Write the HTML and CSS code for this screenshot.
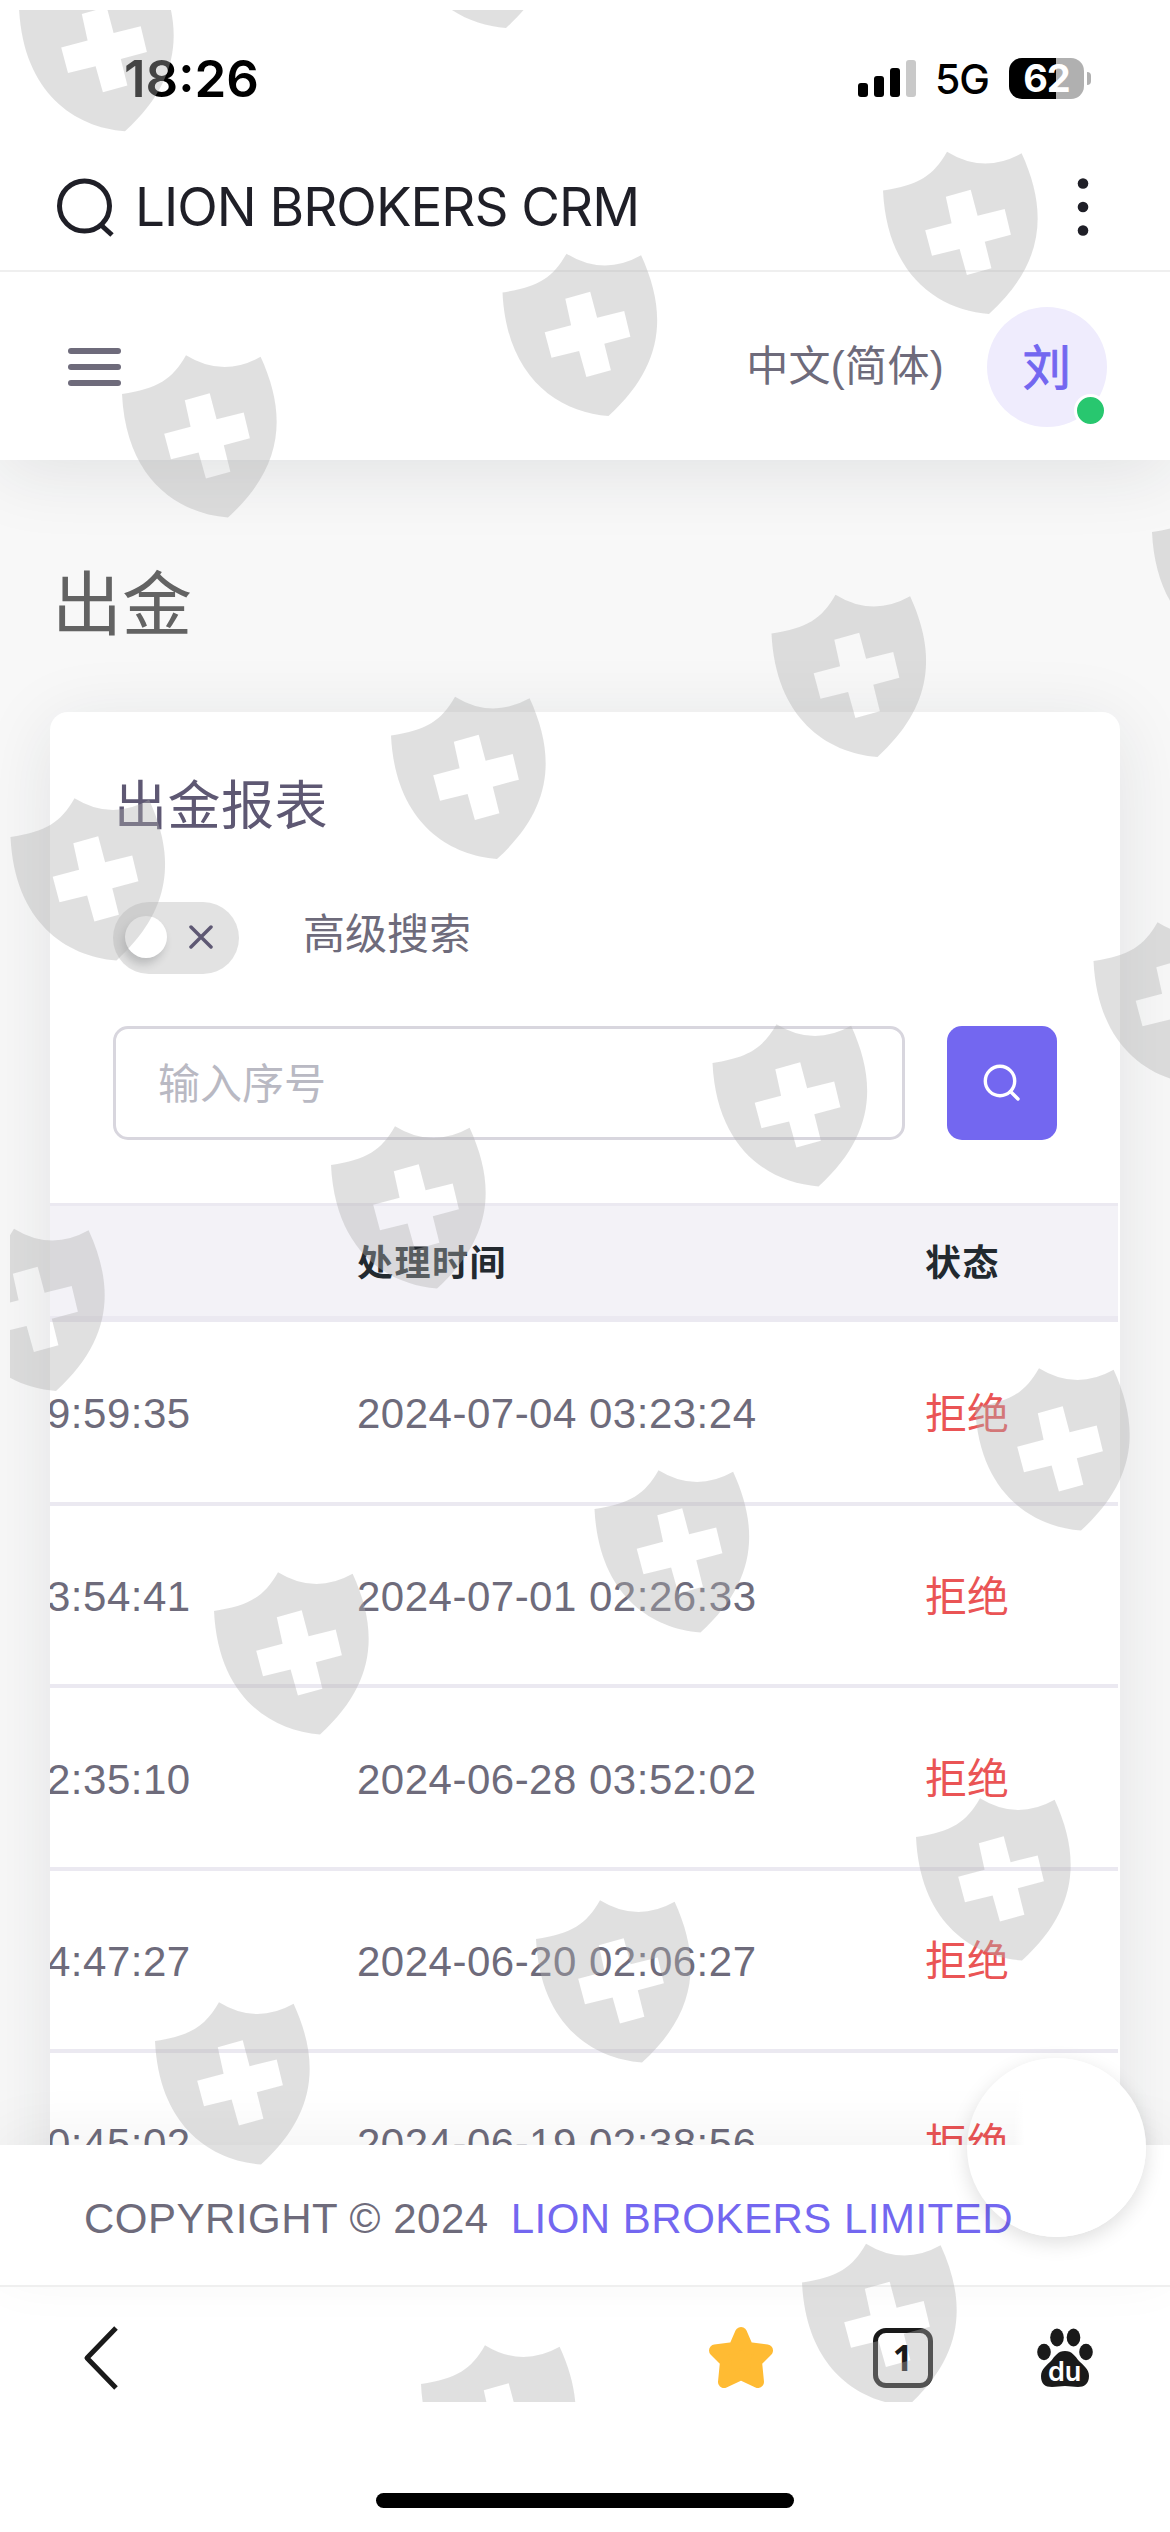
FILE: index.html
```html
<!DOCTYPE html>
<html lang="zh-CN">
<head>
  <meta charset="UTF-8" />
  <meta name="viewport" content="width=device-width, initial-scale=1" />
  <title>LION BROKERS CRM</title>
  <link rel="stylesheet" href="styles.css">
</head>
<body>
<div class="phone">

  <div class="status-bar">
    <span class="clock">18:26</span>
    <div class="status-icons">
      <svg class="signal" width="59" height="38" viewBox="0 0 59 38">
        <rect x="0" y="23" width="10" height="14" rx="3" />
        <rect x="16" y="16" width="10" height="21" rx="3" />
        <rect x="32" y="8" width="10" height="29" rx="3" />
        <rect x="48" y="0" width="10" height="37" rx="3" fill="#c9c9c9" />
      </svg>
      <span class="network">5G</span>
      <span class="battery">62</span>
      <span class="battery-tip"></span>
    </div>
  </div>

  <div class="browser-bar">
    <svg width="58" height="60" viewBox="0 0 58 60" fill="none" stroke="#1f1f27" stroke-width="5">
      <circle cx="28.5" cy="29" r="25" />
      <path d="M45 48l11 10" />
    </svg>
    <span class="page-title">LION BROKERS CRM</span>
    <svg class="dots" width="12" height="60" viewBox="0 0 12 60" fill="#1f1f27">
      <circle cx="6" cy="6.500" r="5.300" /><circle cx="6" cy="30" r="5.300" /><circle cx="6" cy="53.500" r="5.300" />
    </svg>
  </div>

  <header class="navbar">
    <div class="menu"><i></i><i></i><i></i></div>
    <span class="lang">中文(简体)</span>
    <div class="avatar">刘<span class="online"></span></div>
  </header>

  <main class="content">
    <h1>出金</h1>
    <section class="card">
      <h2>出金报表</h2>
      <div class="switch-row">
        <div class="switch">
          <span class="knob"></span>
          <svg width="24" height="24" viewBox="0 0 24 24" stroke="#5e5873" stroke-width="3.500" stroke-linecap="round"><path d="M2 2l20 20M22 2L2 22" /></svg>
        </div>
        <span class="switch-label">高级搜索</span>
      </div>
      <div class="search-row">
        <div class="search-input">输入序号</div>
        <div class="search-btn">
          <svg width="38" height="38" viewBox="0 0 38 38" fill="none" stroke="#fff" stroke-width="3.400" stroke-linecap="round">
            <circle cx="17" cy="17" r="14.700" /><path d="M27.500 27.500l7.500 7.500" />
          </svg>
        </div>
      </div>
      <div class="table-wrap">
        <table>
          <thead>
            <tr><th class="col-apply"></th><th class="col-time">处理时间</th><th>状态</th></tr>
          </thead>
          <tbody>
            <tr><td>9:59:35</td><td>2024-07-04 03:23:24</td><td class="reject">拒绝</td></tr>
            <tr><td>3:54:41</td><td>2024-07-01 02:26:33</td><td class="reject">拒绝</td></tr>
            <tr><td>2:35:10</td><td>2024-06-28 03:52:02</td><td class="reject">拒绝</td></tr>
            <tr><td>4:47:27</td><td>2024-06-20 02:06:27</td><td class="reject">拒绝</td></tr>
            <tr><td>0:45:02</td><td>2024-06-19 02:38:56</td><td class="reject">拒绝</td></tr>
          </tbody>
        </table>
      </div>
    </section>
  </main>

  <footer class="footer">
    <span>COPYRIGHT © 2024</span>
    <a class="company">LION BROKERS LIMITED</a>
    <div class="float-btn"></div>
  </footer>

  <nav class="tab-bar">
    <svg class="back" width="36" height="66" viewBox="0 0 36 66" fill="none" stroke="#1a1a1a" stroke-width="5" stroke-linejoin="round"><path d="M33 3L4 33l29 30" /></svg>
    <svg class="star" width="64" height="64" viewBox="0 0 64 64" fill="#ffbb33" stroke="#ffbb33" stroke-width="12" stroke-linejoin="round">
      <path d="M32 7l6.500 15L58 24.500 47 35.500l2 20.500-17-8-17 8 2-20.500L6 24.500 25.500 22z" />
    </svg>
    <div class="tabs">1</div>
    <svg class="paw" width="58" height="60" viewBox="0 0 58 60" fill="#1a1a1a">
      <ellipse cx="21" cy="9.500" rx="6.800" ry="9" />
      <ellipse cx="37.500" cy="9.500" rx="6.800" ry="9" />
      <ellipse cx="8" cy="24" rx="6.800" ry="8.300" />
      <ellipse cx="50" cy="24" rx="6.800" ry="8.300" />
      <path d="M29 23c7 0 10 5 14 10 4 4 10 8 10 15 0 8-5 11-11 11-5 0-8-1-13-1s-8 1-13 1C9 59 5 56 5 48c0-7 6-11 10-15 4-5 7-10 14-10z" />
      <text class="paw-text" x="12" y="53">du</text>
    </svg>
  </nav>
  <div class="home-bar"></div>

  <!-- watermark -->
  <svg class="watermark" width="1160" height="2392" viewBox="10 10 1160 2392">
    <defs>
      <path id="shield" fill-rule="evenodd" d="M0 39.500C36 34 50 25 64 .7Q101 23.500 138.600 2.300C165 60 162 112 106 163C55 159 4 124 0 39.500zM62.800 45.700L87.700 38.700 94.600 64.700 121.700 58 127.900 83.700 101.800 90.700 108.400 117.300 83.900 124 76.600 98 49 104.700 42.200 79.300 68.600 72.300z" />
    </defs>
    <use href="#shield" x="19" y="-31.700" />
    <use href="#shield" x="400" y="-135" />
    <use href="#shield" x="883" y="151" />
    <use href="#shield" x="502.500" y="253" />
    <use href="#shield" x="122" y="354.500" />
    <use href="#shield" x="1152" y="492.500" />
    <use href="#shield" x="771.500" y="594" />
    <use href="#shield" x="391" y="696" />
    <use href="#shield" x="10.500" y="797.500" />
    <use href="#shield" x="1093.500" y="921.500" />
    <use href="#shield" x="712.500" y="1023.500" />
    <use href="#shield" x="331" y="1125.500" />
    <use href="#shield" x="-50" y="1228" />
    <use href="#shield" x="975" y="1367.500" />
    <use href="#shield" x="594.500" y="1469.500" />
    <use href="#shield" x="214" y="1571.500" />
    <use href="#shield" x="916" y="1797.500" />
    <use href="#shield" x="536" y="1899.500" />
    <use href="#shield" x="155" y="2001.500" />
    <use href="#shield" x="802" y="2243" />
    <use href="#shield" x="421" y="2344.500" />
  </svg>
</div>
</body>
</html>
```
FILE: styles.css
```css
* {
  box-sizing: border-box;
}
body {
  margin: 0;
  font-family: "Liberation Sans", "Noto Sans CJK SC", sans-serif;
  font-size: 42px;
  letter-spacing: .5px;
  color: #6e6b7b;
  background: #fff;
}
.phone {
  position: relative;
  width: 1170px;
  height: 2532px;
  overflow: hidden;
  display: flex;
  flex-direction: column;
}
svg {
  display: block;
  flex: none;
}

/* phone status bar */
.status-bar {
  height: 157px;
  padding: 0 79px 0 124px;
  display: flex;
  justify-content: space-between;
  align-items: center;
  color: #000;
  font-family: Inter, sans-serif;
}
.clock {
  font-size: 51px;
  font-weight: 600;
  letter-spacing: 0;
}
.status-icons {
  display: flex;
  align-items: center;
}
.network {
  font-size: 41px;
  font-weight: 500;
  letter-spacing: -1px;
  margin: 0 20px 0 18px;
}
.battery {
  width: 75px;
  height: 41px;
  line-height: 41px;
  border-radius: 13px;
  background: linear-gradient(90deg, #000 47px, #b0b0b0 47px);
  color: #fff;
  font-size: 38px;
  font-weight: 700;
  letter-spacing: -1px;
  text-align: center;
}
.battery-tip {
  width: 4px;
  height: 13px;
  margin-left: 3px;
  border-radius: 0 5px 5px 0;
  background: #b0b0b0;
}

/* browser title */
.browser-bar {
  position: relative;
  z-index: 2;
  height: 115px;
  padding: 0 81px 13px 56px;
  border-bottom: 2px solid #efefef;
  display: flex;
  align-items: center;
  color: #1f1f27;
  background: #fff;
}
.page-title {
  flex: 1;
  margin-left: 21px;
  font-family: Inter, sans-serif;
  font-size: 53px;
  letter-spacing: -1px;
  white-space: nowrap;
}

/* site header */
.navbar {
  position: relative;
  z-index: 1;
  height: 188px;
  padding: 2px 63px 0 68px;
  display: flex;
  align-items: center;
  background: #fff;
  box-shadow: 0 12px 72px rgba(34, 41, 47, .1);
}
.menu {
  display: grid;
  gap: 10px;
  margin-right: auto;
}
.menu i {
  width: 53px;
  height: 6px;
  border-radius: 3px;
  background: #6e6b7b;
}
.lang {
  padding-bottom: 9px;
  margin-right: 43px;
  letter-spacing: .3px;
}
.avatar {
  position: relative;
  width: 120px;
  height: 120px;
  line-height: 124px;
  border-radius: 50%;
  background: #efecfd;
  color: #7367f0;
  font-size: 48px;
  -webkit-text-stroke: 1px #7367f0;
  text-align: center;
}
.online {
  position: absolute;
  right: 0;
  bottom: 0;
  width: 33px;
  height: 33px;
  border: 3px solid #fff;
  border-radius: 50%;
  background: #28c76f;
}

/* page body */
.content {
  height: 1685px;
  padding: 92px 50px 0;
  background: #f8f8f8;
  overflow: hidden;
}
h1 {
  margin: 0 0 52px 2px;
  font-size: 70px;
  line-height: 109px;
  height: 108px;
  font-weight: 400;
  letter-spacing: 0;
  color: #636363;
}
.card {
  height: 1600px;
  padding: 62px 0 0;
  border-radius: 18px;
  background: #fff;
  box-shadow: 0 12px 72px rgba(34, 41, 47, .1);
}
h2 {
  margin: 0 0 0 64px;
  font-size: 53px;
  line-height: 66px;
  font-weight: 400;
  color: #5e5873;
}
.switch-row {
  display: flex;
  align-items: center;
  gap: 64px;
  margin: 62px 0 0 63px;
  height: 72px;
  line-height: 64px;
}
.switch {
  width: 126px;
  height: 72px;
  padding: 0 26px 3px 12px;
  border-radius: 36px;
  background: #e2e2e2;
  display: flex;
  align-items: center;
  justify-content: space-between;
}
.switch-label {
  padding-bottom: 6px;
  letter-spacing: 0;
}
.knob {
  width: 42px;
  height: 42px;
  border-radius: 50%;
  background: #fff;
  box-shadow: -3px 6px 9px rgba(34, 41, 47, .2);
}
.search-row {
  display: flex;
  gap: 42px;
  padding: 52px 63px 63px;
}
.search-input {
  flex: 1;
  height: 114px;
  padding-left: 42px;
  line-height: 112px;
  letter-spacing: 0;
  border: 3px solid #d8d6de;
  border-radius: 15px;
  color: #b9b9c3;
}
.search-btn {
  width: 110px;
  height: 114px;
  border-radius: 15px;
  background: #7367f0;
  display: grid;
  place-items: center;
}
.table-wrap {
  width: 1068px;
  overflow: hidden;
}
table {
  width: 1071px;
  margin-left: -3px;
  table-layout: fixed;
  border-collapse: separate;
  border-spacing: 0;
}
th, td {
  padding: 0;
  text-align: left;
  white-space: nowrap;
}
th {
  height: 119px;
  padding-bottom: 3px;
  background: #f3f2f7;
  border-top: 3px solid #ebe9f1;
  border-bottom: 6px solid #ebe9f1;
  color: #22292f;
  font-size: 36px;
  font-weight: 600;
  letter-spacing: 1.5px;
}
.col-apply {
  width: 310px;
}
.col-time {
  width: 568px;
}
td {
  height: 182.4px;
  padding-top: 4px;
  border-bottom: 4px solid #ebe9f1;
}
tr:first-child td {
  height: 184px;
}
.reject {
  padding: 0 0 4px;
  letter-spacing: 0;
  color: #ea5455;
}

/* copyright strip */
.footer {
  position: relative;
  height: 142px;
  padding: 7px 84px 0;
  border-bottom: 2px solid #efefef;
  display: flex;
  align-items: center;
  gap: 22px;
  background: #fff;
  box-shadow: 0 -12px 60px rgba(0, 0, 0, .05);
  white-space: nowrap;
}
.company {
  color: #7367f0;
}
.float-btn {
  position: absolute;
  left: 967px;
  top: -87px;
  width: 179px;
  height: 179px;
  border-radius: 50%;
  background: linear-gradient(90deg, rgba(255, 255, 255, 0) 26%, #fff 32%);
  box-shadow: 0 6px 20px rgba(0, 0, 0, .13);
}

/* browser toolbar */
.tab-bar {
  height: 142px;
  padding: 0 76px 0 83px;
  display: flex;
  align-items: center;
}
.star {
  margin: 0 100px 0 auto;
}
.tabs {
  width: 60px;
  height: 60px;
  line-height: 50px;
  margin-right: 103px;
  border: 5px solid #1a1a1a;
  border-radius: 13px;
  color: #1a1a1a;
  font-family: "Noto Sans", sans-serif;
  font-size: 35px;
  font-weight: 700;
  text-align: center;
}
.paw-text {
  fill: #fff;
  font-family: Inter, sans-serif;
  font-size: 27px;
  font-weight: 600;
  letter-spacing: 0;
}
.home-bar {
  width: 418px;
  height: 15px;
  margin: 64px auto 0;
  border-radius: 8px;
  background: #000;
}
.watermark {
  position: absolute;
  left: 10px;
  top: 10px;
  z-index: 5;
  fill: rgba(174, 174, 174, .39);
  pointer-events: none;
}
```
